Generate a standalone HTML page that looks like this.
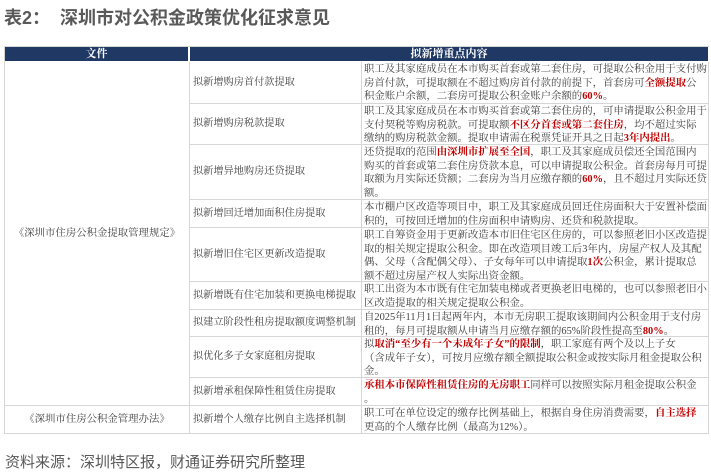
<!DOCTYPE html>
<html><head><meta charset="utf-8"><style>
*{margin:0;padding:0;box-sizing:border-box}
body{width:711px;height:474px;background:#fff;position:relative;overflow:hidden;font-family:"Liberation Serif","Noto Serif CJK SC",serif;color:#404040}
.t{position:absolute;left:4px;top:4px;font:bold 18px "Liberation Sans","Noto Sans CJK SC",sans-serif;color:#595959}
.f{position:absolute;left:5px;top:451px;font:15px "Liberation Sans","Noto Sans CJK SC",sans-serif;color:#595959}
.c{position:absolute;border-right:1px solid #d6d6d6;border-bottom:1px solid #d6d6d6;font-size:10.4px;line-height:13.6px}
.h{background:#1f3864;color:#fff;text-align:center;font-weight:bold;font-size:11px;line-height:14px;border-color:#fff}
.m{display:flex;align-items:center;padding-left:3px;white-space:nowrap;font-size:10.2px}
.x{padding:1px 0 0 2px;white-space:nowrap;overflow:hidden}
.r{color:#c00000;font-weight:bold}
</style></head><body>
<div class="t">表2：&nbsp;&nbsp;深圳市对公积金政策优化征求意见</div>
<div style="position:absolute;left:4px;top:46px;width:705px;height:388px;border-left:1px solid #d6d6d6;border-top:1px solid #d6d6d6"></div>
<div class="c h" style="left:5px;top:47px;width:184px;height:15px">文件</div>
<div class="c h" style="left:190px;top:47px;width:519px;height:15px">拟新增重点内容</div>
<div class="c" style="left:5px;top:62px;width:185px;height:344px;display:flex;align-items:center;justify-content:center">《深圳市住房公积金提取管理规定》</div>
<div class="c" style="left:5px;top:406px;width:185px;height:28px;display:flex;align-items:center;justify-content:center">《深圳市住房公积金管理办法》</div>

<div class="c m" style="left:190px;top:62px;width:172px;height:42px">拟新增购房首付款提取</div>
<div class="c m" style="left:190px;top:104px;width:172px;height:41px">拟新增购房税款提取</div>
<div class="c m" style="left:190px;top:145px;width:172px;height:55px">拟新增异地购房还贷提取</div>
<div class="c m" style="left:190px;top:200px;width:172px;height:28px">拟新增回迁增加面积住房提取</div>
<div class="c m" style="left:190px;top:228px;width:172px;height:54px">拟新增旧住宅区更新改造提取</div>
<div class="c m" style="left:190px;top:282px;width:172px;height:28px">拟新增既有住宅加装和更换电梯提取</div>
<div class="c m" style="left:190px;top:310px;width:172px;height:27px">拟建立阶段性租房提取额度调整机制</div>
<div class="c m" style="left:190px;top:337px;width:172px;height:41px">拟优化多子女家庭租房提取</div>
<div class="c m" style="left:190px;top:378px;width:172px;height:28px">拟新增承租保障性租赁住房提取</div>
<div class="c m" style="left:190px;top:406px;width:172px;height:28px">拟新增个人缴存比例自主选择机制</div>

<div class="c x" style="left:362px;top:62px;width:347px;height:42px">职工及其家庭成员在本市购买首套或第二套住房，可提取公积金用于支付购<br>房首付款，可提取额在不超过购房首付款的前提下，首套房可<span class="r">全额提取</span>公<br>积金账户余额，二套房可提取公积金账户余额的<span class="r">60%</span>。</div>
<div class="c x" style="left:362px;top:104px;width:347px;height:41px">职工及其家庭成员在本市购买首套或第二套住房的，可申请提取公积金用于<br>支付契税等购房税款。可提取额<span class="r">不区分首套或第二套住房</span>，均不超过实际<br>缴纳的购房税款金额。提取申请需在税票凭证开具之日起<span class="r">3年内提出</span>。</div>
<div class="c x" style="left:362px;top:145px;width:347px;height:55px">还贷提取的范围<span class="r">由深圳市扩展至全国</span>，职工及其家庭成员偿还全国范围内<br>购买的首套或第二套住房贷款本息，可以申请提取公积金。首套房每月可提<br>取额为月实际还贷额；二套房为当月应缴存额的<span class="r">60%</span>，且不超过月实际还贷<br>额。</div>
<div class="c x" style="left:362px;top:200px;width:347px;height:28px">本市棚户区改造等项目中，职工及其家庭成员回迁住房面积大于安置补偿面<br>积的，可按回迁增加的住房面积申请购房、还贷和税款提取。</div>
<div class="c x" style="left:362px;top:228px;width:347px;height:54px">职工自筹资金用于更新改造本市旧住宅区住房的，可以参照老旧小区改造提<br>取的相关规定提取公积金。即在改造项目竣工后3年内，房屋产权人及其配<br>偶、父母（含配偶父母）、子女每年可以申请提取<span class="r">1次</span>公积金，累计提取总<br>额不超过房屋产权人实际出资金额。</div>
<div class="c x" style="left:362px;top:282px;width:347px;height:28px">职工出资为本市既有住宅加装电梯或者更换老旧电梯的，也可以参照老旧小<br>区改造提取的相关规定提取公积金。</div>
<div class="c x" style="left:362px;top:310px;width:347px;height:27px">自2025年11月1日起两年内，本市无房职工提取该期间内公积金用于支付房<br>租的，每月可提取额从申请当月应缴存额的65%阶段性提高至<span class="r">80%</span>。</div>
<div class="c x" style="left:362px;top:337px;width:347px;height:41px">拟<span class="r">取消“至少有一个未成年子女”的限制</span>，职工家庭有两个及以上子女<br>（含成年子女），可按月应缴存额全额提取公积金或按实际月租金提取公积<br>金。</div>
<div class="c x" style="left:362px;top:378px;width:347px;height:28px"><span class="r">承租本市保障性租赁住房的无房职工</span>同样可以按照实际月租金提取公积金<br>。</div>
<div class="c x" style="left:362px;top:406px;width:347px;height:28px">职工可在单位设定的缴存比例基础上，根据自身住房消费需要，<span class="r">自主选择</span><br>更高的个人缴存比例（最高为12%）。</div>
<div class="f">资料来源：深圳特区报，财通证券研究所整理</div>
</body></html>
